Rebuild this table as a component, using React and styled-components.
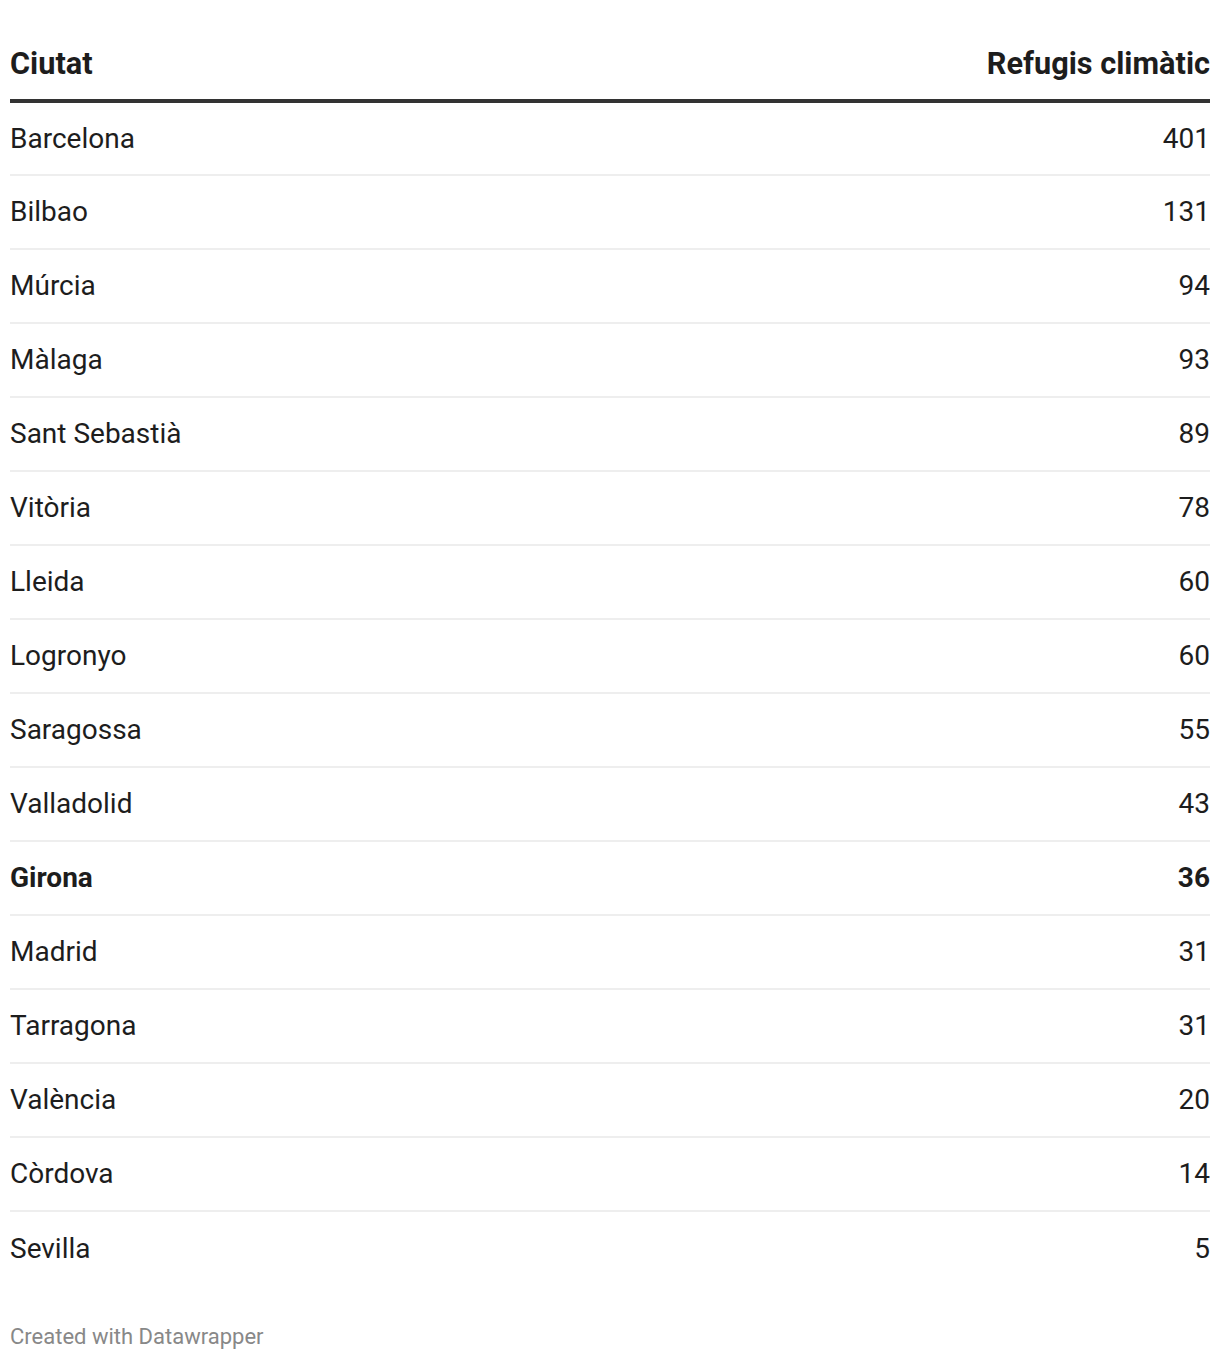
import React from 'react';
import styled, { createGlobalStyle } from 'styled-components';

const GlobalStyle = createGlobalStyle`
    body {
        margin: 0;
        background: #ffffff;
        font-family: Roboto, "Liberation Sans", sans-serif;
        color: #1d1d1d;
    }
`;

const rows = [
    ['Barcelona', 401],
    ['Bilbao', 131],
    ['Múrcia', 94],
    ['Màlaga', 93],
    ['Sant Sebastià', 89],
    ['Vitòria', 78],
    ['Lleida', 60],
    ['Logronyo', 60],
    ['Saragossa', 55],
    ['Valladolid', 43],
    ['Girona', 36, true],
    ['Madrid', 31],
    ['Tarragona', 31],
    ['València', 20],
    ['Còrdova', 14],
    ['Sevilla', 5],
];

function App() {
    return (
        <Page>
            <GlobalStyle />
            <Table>
                <thead>
                    <tr>
                        <HeadCell>Ciutat</HeadCell>
                        <HeadCell right>Refugis climàtic</HeadCell>
                    </tr>
                </thead>
                <tbody>
                    {rows.map(([city, count, bold], i) => (
                        <Row key={city} last={i === rows.length - 1}>
                            <Cell bold={bold}>{city}</Cell>
                            <Cell bold={bold} right>{count}</Cell>
                        </Row>
                    ))}
                </tbody>
            </Table>
            <Footer>Created with Datawrapper</Footer>
        </Page>
    );
}

export default App;

const Page = styled.div`
    padding: 30px 10px 0 10px;
`;

const Table = styled.table`
    width: 100%;
    border-collapse: collapse;
`;

const HeadCell = styled.th`
    font-size: 30.7px;
    font-weight: 700;
    line-height: 34px;
    padding: 17px 0 18px 0;
    text-align: ${props => (props.right ? 'right' : 'left')};
    border-bottom: 4px solid #333333;
    color: #1d1d1d;
`;

const Row = styled.tr`
    border-bottom: ${props => (props.last ? 'none' : '2px solid #eeeeee')};
`;

const Cell = styled.td`
    font-size: 28px;
    font-weight: ${props => (props.bold ? 700 : 400)};
    line-height: 32px;
    height: 74px;
    padding: 0;
    box-sizing: border-box;
    vertical-align: middle;
    text-align: ${props => (props.right ? 'right' : 'left')};
`;

const Footer = styled.div`
    margin-top: 39px;
    font-size: 22px;
    color: #888888;
`;
